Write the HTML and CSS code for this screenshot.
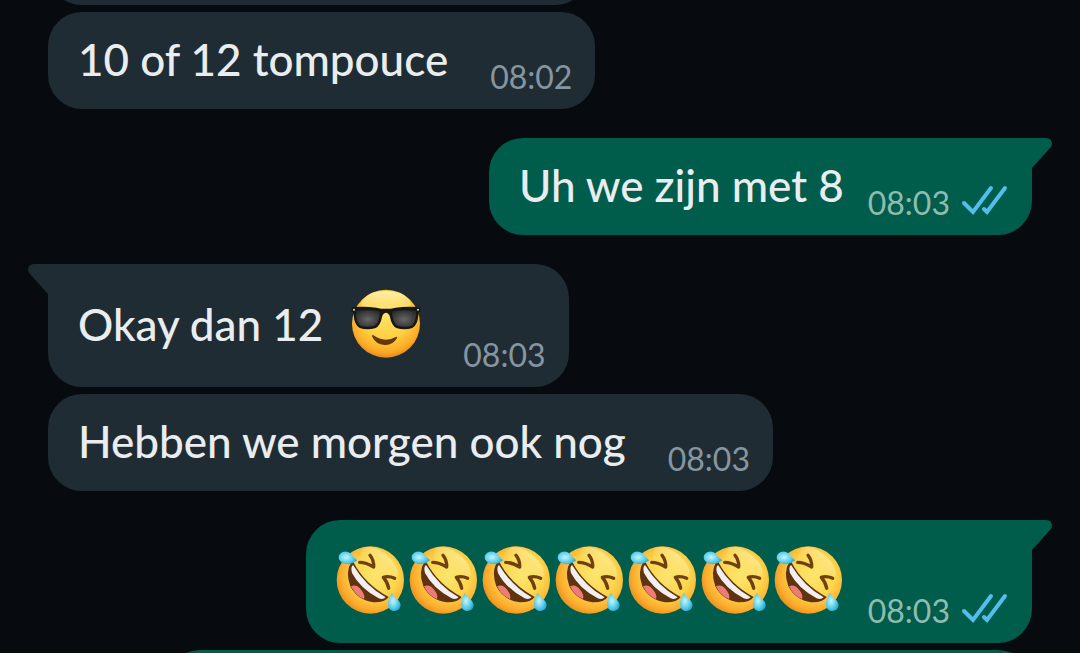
FILE: index.html
```
<!DOCTYPE html>
<html lang="nl">
<head>
    <meta charset="UTF-8">
    <meta name="viewport" content="width=device-width, initial-scale=1.0">
    <title>Chat</title>
    <link rel="stylesheet" href="styles.css">
</head>
<body>

<!-- Shared icons -->
<svg class="sprite" aria-hidden="true">
    <defs>
        <radialGradient id="face" cx="0.5" cy="0.38" r="0.64">
            <stop offset="0" stop-color="#ffe368"/>
            <stop offset="0.55" stop-color="#fdcf40"/>
            <stop offset="0.84" stop-color="#fba927"/>
            <stop offset="1" stop-color="#e08416"/>
        </radialGradient>
        <radialGradient id="face-tilted" cx="0.58" cy="0.42" r="0.64">
            <stop offset="0" stop-color="#fbe66e"/>
            <stop offset="0.5" stop-color="#fbd64e"/>
            <stop offset="0.82" stop-color="#fcac2c"/>
            <stop offset="1" stop-color="#e38a1c"/>
        </radialGradient>
        <linearGradient id="shine" x1="0" y1="0" x2="0" y2="1">
            <stop offset="0" stop-color="#fff4ba" stop-opacity="0.9"/>
            <stop offset="1" stop-color="#ffe680" stop-opacity="0"/>
        </linearGradient>
        <radialGradient id="lens" cx="0.5" cy="0.55" r="0.6">
            <stop offset="0" stop-color="#666"/>
            <stop offset="1" stop-color="#2c2c2c"/>
        </radialGradient>
        <radialGradient id="drop" cx="0.4" cy="0.45" r="0.65">
            <stop offset="0" stop-color="#c5f6ff"/>
            <stop offset="0.6" stop-color="#5bcdea"/>
            <stop offset="1" stop-color="#22a4cb"/>
        </radialGradient>
    </defs>
    <symbol id="cool" viewBox="0 0 210 210">
        <circle cx="105" cy="104" r="102" fill="url(#face)"/>
        <ellipse cx="105" cy="46" rx="74" ry="40" fill="url(#shine)"/>
        <path d="M2 57Q2 54 7 54Q45 51 76 56Q105 63 134 56Q165 51 203 54Q208 54 208 57V67Q203 69 202 78Q200 108 184 117Q162 124 138 118Q122 112 116 80Q112 71 105 71Q98 71 94 80Q88 112 72 118Q48 124 26 117Q10 108 8 78Q7 69 2 67Z" fill="#191714"/>
        <path d="M15 67Q48 61 83 67Q88 69 86 80Q82 105 68 111Q48 116 30 111Q18 104 15 80Z" fill="url(#lens)"/>
        <path d="M195 67Q162 61 127 67Q122 69 124 80Q128 105 142 111Q162 116 180 111Q192 104 195 80Z" fill="url(#lens)"/>
        <circle cx="9" cy="62" r="3" fill="#ddd"/>
        <circle cx="201" cy="62" r="3" fill="#ddd"/>
        <path d="M66 138Q101 163 136 143Q140 143 138 148Q124 170 101 168Q74 166 64 144Q62 137 66 138Z" fill="#65380b"/>
    </symbol>
    <symbol id="rofl" viewBox="0 0 210 210">
        <circle cx="103" cy="105" r="101" fill="url(#face-tilted)"/>
        <ellipse cx="130" cy="56" rx="66" ry="34" transform="rotate(40 130 56)" fill="url(#shine)" opacity="0.6"/>
        <path d="M52 51Q86 117 158 156Q147 173 112 172Q65 166 43 124Q27 80 46 51Z" fill="#5f3310"/>
        <path d="M45 124Q63 116 78 138Q88 151 84 162Q59 153 45 124Z" fill="#ee7c76"/>
        <path d="M51 60Q90 124 149 157Q141 165 128 160Q72 130 48 84Q43 66 51 60Z" fill="#f2eff0"/>
        <path d="M71 52Q90 52 113 66Q114 46 102 31" fill="none" stroke="#704010" stroke-width="10" stroke-linejoin="round" stroke-linecap="round"/>
        <path d="M176 100Q158 92 142 97Q155 112 158 130" fill="none" stroke="#704010" stroke-width="10" stroke-linejoin="round" stroke-linecap="round"/>
        <path d="M64 46Q52 37 43 25Q32 16 18 22Q5 30 9 43Q16 58 37 58Q50 57 64 46Z" fill="url(#drop)"/>
        <path d="M168 143Q156 160 156 179Q159 198 176 198Q193 196 194 180Q192 166 178 158Q171 151 168 143Z" fill="url(#drop)"/>
    </symbol>
    <symbol id="ticks" viewBox="0 0 48 32">
        <path d="M3 19L12 28L30 4M23 25L26 28L44 4" fill="none" stroke="#53bdeb" stroke-width="4" stroke-linecap="round"/>
    </symbol>
    <symbol id="tail" viewBox="0 0 20 30">
        <path d="M0 0H14Q20 0 20 6Q20 8 18 10L0 30Z" fill="currentColor"/>
    </symbol>
</svg>

<main class="chat">
    <div class="message incoming clipped-in"></div>

    <div class="message incoming">
        <p class="text">10 of 12 tompouce</p>
        <time class="time">08:02</time>
    </div>

    <div class="message outgoing first">
        <svg class="tail" aria-hidden="true"><use href="#tail"/></svg>
        <p class="text">Uh we zijn met 8</p>
        <time class="time">08:03</time>
        <svg class="ticks" role="img" aria-label="Gelezen"><use href="#ticks"/></svg>
    </div>

    <div class="message incoming first">
        <svg class="tail" aria-hidden="true"><use href="#tail"/></svg>
        <p class="text with-emoji">Okay dan 12 <svg class="emoji" role="img" aria-label="😎"><use href="#cool"/></svg></p>
        <time class="time">08:03</time>
    </div>

    <div class="message incoming">
        <p class="text">Hebben we morgen ook nog</p>
        <time class="time">08:03</time>
    </div>

    <div class="message outgoing first">
        <svg class="tail" aria-hidden="true"><use href="#tail"/></svg>
        <p class="text with-emoji emoji-row">
            <svg class="emoji" role="img" aria-label="🤣"><use href="#rofl"/></svg>
            <svg class="emoji" role="img" aria-label="🤣"><use href="#rofl"/></svg>
            <svg class="emoji" role="img" aria-label="🤣"><use href="#rofl"/></svg>
            <svg class="emoji" role="img" aria-label="🤣"><use href="#rofl"/></svg>
            <svg class="emoji" role="img" aria-label="🤣"><use href="#rofl"/></svg>
            <svg class="emoji" role="img" aria-label="🤣"><use href="#rofl"/></svg>
            <svg class="emoji" role="img" aria-label="🤣"><use href="#rofl"/></svg>
        </p>
        <time class="time">08:03</time>
        <svg class="ticks" role="img" aria-label="Gelezen"><use href="#ticks"/></svg>
    </div>

    <div class="message outgoing clipped-out"></div>
</main>

</body>
</html>
```
FILE: styles.css
```
:root {
    --chat-bg: #070b0f;
    --incoming: #202c33;
    --outgoing: #005c4b;
    --text: #e9edef;
    --time-in: #8696a0;
    --time-out: #8fbbb0;
    --radius: 34px;
}

* {
    box-sizing: border-box;
    margin: 0;
    padding: 0;
}

body {
    font-family: Lato, "Liberation Sans", sans-serif;
    background-color: var(--chat-bg);
    color: var(--text);
}

.sprite {
    position: absolute;
    width: 0;
    height: 0;
}

.chat {
    display: flex;
    flex-direction: column;
    gap: 7px;
    height: 100vh;
    padding: 0 48px;
    overflow: hidden;
}

.message {
    position: relative;
    display: flex;
    flex-shrink: 0;
    align-items: flex-end;
    padding: 20px 23px 12px 30px;
    border-radius: var(--radius);
}

.incoming {
    align-self: flex-start;
    background-color: var(--incoming);
    color: var(--incoming);
}

.outgoing {
    align-self: flex-end;
    background-color: var(--outgoing);
    color: var(--outgoing);
}

.first {
    margin-top: 22px;
}

.incoming.first {
    border-top-left-radius: 0;
}

.outgoing.first {
    border-top-right-radius: 0;
}

.text {
    margin-bottom: 11px;
    color: var(--text);
    font-size: 44px;
    font-weight: 500;
    line-height: 54px;
    white-space: nowrap;
}

.with-emoji {
    display: flex;
    align-items: center;
    gap: 28px;
    min-height: 80px;
}

.emoji-row {
    gap: 3px;
}

.emoji {
    width: 70px;
    height: 70px;
}

.time {
    margin-left: 42px;
    color: var(--time-in);
    font-size: 32px;
    line-height: 40px;
}

.outgoing .time {
    margin-left: 24px;
    color: var(--time-out);
}

.ticks {
    width: 48px;
    height: 32px;
    margin: 0 0 7px 11px;
}

.tail {
    position: absolute;
    top: 0;
    left: 100%;
    width: 20px;
    height: 30px;
}

.incoming .tail {
    right: 100%;
    left: auto;
    transform: scaleX(-1);
}

/* Neighbouring messages cut off by the edges of the screen */
.clipped-in {
    width: 55%;
    height: 97px;
    margin-top: -92px;
}

.clipped-out {
    width: 88%;
    height: 97px;
}
```
